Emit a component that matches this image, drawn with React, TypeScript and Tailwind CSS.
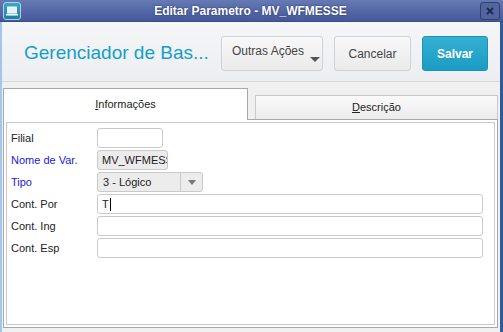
import React from "react";

const fields: { label: string; blue?: boolean; kind: string; value?: string; width?: string }[] = [
  { label: "Filial", kind: "input", width: "w-[66px]" },
  { label: "Nome de Var.", blue: true, kind: "readonly", value: "MV_WFMESSE", width: "w-[71px]" },
  { label: "Tipo", blue: true, kind: "select", value: "3 - Lógico", width: "w-[106px]" },
  { label: "Cont. Por", kind: "input", value: "T", width: "flex-1" },
  { label: "Cont. Ing", kind: "input", width: "flex-1" },
  { label: "Cont. Esp", kind: "input", width: "flex-1" },
];

function TitleBar() {
  return (
    <div className="h-[22px] flex items-center bg-gradient-to-b from-[#6679b4] to-[#45599a] border-b border-[#3a4d88] px-[3px]">
      <div className="w-[18px] h-[18px] rounded-[3px] bg-gradient-to-b from-[#3aa8c8] to-[#1a7ea6] border border-[#a9d4e6] flex items-center justify-center">
        <svg width="12" height="10" viewBox="0 0 12 10">
          <rect x="1.5" y="1" width="9" height="6" fill="#dff3fb" stroke="#ffffff" strokeWidth="1" />
          <rect x="0" y="8" width="12" height="1.5" fill="#ffffff" />
        </svg>
      </div>
      <div className="flex-1 text-center text-white font-bold text-[12px] [text-shadow:0_0_2px_#1b2a55]">
        Editar Parametro - MV_WFMESSE
      </div>
      <div className="w-[20px] h-[18px] rounded-[3px] border border-[#2e3f70] bg-[#52659f] flex items-center justify-center">
        <svg width="8" height="8" viewBox="0 0 8 8">
          <path d="M1 1 L7 7 M7 1 L1 7" stroke="#1f2b4f" strokeWidth="2" />
        </svg>
      </div>
    </div>
  );
}

function Header() {
  return (
    <div className="h-[60px] flex items-center bg-gradient-to-b from-[#f5f6f8] to-[#eceef1] border-b border-[#d6d8db] pl-[22px] pr-[12px] pt-[4px]">
      <div className="flex-1 text-[19px] text-[#149fc9]">Gerenciador de Bas...</div>
      <button className="relative w-[102px] h-[35px] mr-[11px] rounded-[3px] border border-[#cfd1d4] bg-gradient-to-b from-[#f8f8f8] to-[#ebebeb] text-[12px] text-[#444] pb-[6px] pr-[8px]">
        Outras Ações
        <span className="absolute right-[2px] bottom-[8px] w-0 h-0 border-l-[5px] border-r-[5px] border-t-[5px] border-l-transparent border-r-transparent border-t-[#555]" />
      </button>
      <button className="w-[77px] h-[35px] mr-[11px] rounded-[3px] border border-[#cfd1d4] bg-gradient-to-b from-[#f8f8f8] to-[#ebebeb] text-[12px] text-[#444]">
        Cancelar
      </button>
      <button className="w-[66px] h-[35px] rounded-[3px] border border-[#1b93b8] bg-gradient-to-b from-[#33afd2] to-[#1a9cc4] text-[12px] font-bold text-white">
        Salvar
      </button>
    </div>
  );
}

function Field({ f }: { f: (typeof fields)[number] }) {
  return (
    <div className="flex items-center h-[22px]">
      <div className={`w-[86px] text-[11px] ${f.blue ? "text-[#1a1ad8]" : "text-[#222]"}`}>{f.label}</div>
      {f.kind === "select" ? (
        <div className={`${f.width} h-[20px] flex rounded-[3px] border border-[#c9c9c9] bg-[#ececec] text-[11px] text-[#222]`}>
          <div className="flex-1 pl-[5px] flex items-center">{f.value}</div>
          <div className="w-[22px] border-l border-[#c9c9c9] flex items-center justify-center">
            <span className="w-0 h-0 border-l-[4px] border-r-[4px] border-t-[5px] border-l-transparent border-r-transparent border-t-[#777]" />
          </div>
        </div>
      ) : (
        <div
          className={`${f.width} h-[20px] rounded-[3px] border border-[#c9c9c9] ${f.kind === "readonly" ? "bg-[#ececec]" : "bg-white"} text-[11px] text-[#222] pl-[4px] flex items-center overflow-hidden whitespace-nowrap`}
        >
          {f.value}
          {f.value === "T" && <span className="w-px h-[13px] bg-black ml-[1px]" />}
        </div>
      )}
    </div>
  );
}

export default function App() {
  return (
    <div className="w-[503px] h-[332px] flex flex-col bg-[#f0f0f0] overflow-hidden" style={{ fontFamily: '"Liberation Sans", Arial, sans-serif' }}>
      <TitleBar />
      <div className="flex-1 flex border-l-2 border-[#a3c6ee] border-r-[3px] border-r-[#2e5b9e]">
        <div className="flex-1 flex flex-col">
          <Header />
          <div className="flex-1 flex flex-col px-[1px] pt-[5px] pb-[4px] bg-[#f0f0f0]">
            <div className="flex items-end h-[32px]">
              <div className="w-[245px] h-[32px] bg-white border border-b-0 border-[#a8a8a8] flex items-center justify-center text-[11px] text-[#222] z-10 -mb-px">
                <span><span className="underline">I</span>nformações</span>
              </div>
              <div className="w-[7px]" />
              <div className="w-[243px] h-[24px] bg-gradient-to-b from-[#fafafa] to-[#ececec] border border-b-0 border-[#c8c8c8] flex items-center justify-center text-[11px] text-[#222]">
                <span><span className="underline">D</span>escrição</span>
              </div>
            </div>
            <div className="flex-1 w-[495px] border border-[#a8a8a8] bg-white p-[2px]">
              <div className="h-full border border-[#c8c8c8] pl-[4px] pr-[11px] pt-[4px] flex flex-col">
                {fields.map((f) => (
                  <Field key={f.label} f={f} />
                ))}
              </div>
            </div>
          </div>
        </div>
      </div>
    </div>
  );
}
